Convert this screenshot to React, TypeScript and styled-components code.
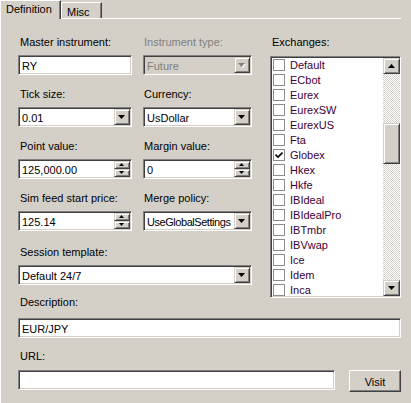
import React from 'react';
import styled, { createGlobalStyle, css } from 'styled-components';

const Global = createGlobalStyle`
  html, body { margin: 0; padding: 0; background: #d4d0c8; }
  body {
    font-family: "Liberation Sans", Arial, sans-serif;
    font-size: 11px;
    color: #000;
    width: 411px;
    height: 403px;
    overflow: hidden;
  }
`;

const sunken = css`
  border: 1px solid;
  border-color: #808080 #ffffff #ffffff #808080;
  box-shadow: inset 1px 1px 0 #404040, inset -1px -1px 0 #d4d0c8;
`;

const raised = css`
  border: 1px solid;
  border-color: #d4d0c8 #404040 #404040 #d4d0c8;
  box-shadow: inset 1px 1px 0 #ffffff, inset -1px -1px 0 #808080;
`;

const Window = styled.div`
  width: 411px;
  height: 403px;
  display: flex;
  flex-direction: column;
`;

const TabStrip = styled.div`
  display: flex;
  align-items: flex-end;
  height: 18px;
  position: relative;
  z-index: 1;
`;

const Tab = styled.div<{ $active?: boolean }>`
  box-sizing: border-box;
  background: #d4d0c8;
  border-top: 1px solid #fff;
  border-left: 1px solid #fff;
  border-right: 1px solid #404040;
  box-shadow: inset -1px 0 0 #808080;
  display: flex;
  align-items: center;
  ${(p) =>
    p.$active
      ? css`
          height: 19px;
          margin-bottom: -1px;
          padding: 0 6px 3px 5px;
          width: 61px;
        `
      : css`
          height: 16px;
          padding: 2px 6px 0 5px;
          width: 41px;
        `}
`;

const Panel = styled.div`
  flex: 1;
  border-top: 1px solid #fff;
  border-left: 1px solid #fff;
  padding: 17px 0 0 17px;
  display: flex;
  flex-direction: column;
  width: 383px;
`;

const Top = styled.div`
  display: flex;
  justify-content: space-between;
  width: 383px;
`;

const FormGrid = styled.div`
  display: grid;
  grid-template-columns: 114px 109px;
  column-gap: 11px;
  row-gap: 13px;
  align-content: start;
`;

const Field = styled.div<{ $span?: boolean }>`
  display: flex;
  flex-direction: column;
  ${(p) =>
    p.$span &&
    css`
      grid-column: 1 / span 2;
      margin-top: 2px;
    `}
`;

const Label = styled.div<{ $disabled?: boolean; $indent?: number }>`
  height: 13px;
  line-height: 13px;
  margin-bottom: 6px;
  padding-left: ${(p) => p.$indent ?? 2}px;
  color: ${(p) => (p.$disabled ? '#808080' : '#000')};
  white-space: nowrap;
`;

const TextBox = styled.div<{ $disabled?: boolean }>`
  ${sunken};
  box-sizing: border-box;
  height: 20px;
  background: ${(p) => (p.$disabled ? '#d4d0c8' : '#fff')};
  color: ${(p) => (p.$disabled ? '#808080' : '#000')};
  display: flex;
  align-items: center;
  padding: 0 2px 0 2px;
  white-space: nowrap;
  overflow: hidden;
`;

const Value = styled.span<{ $tight?: boolean }>`
  flex: 1;
  min-width: 0;
  overflow: hidden;
  padding-top: 1px;
  padding-left: 1px;
  letter-spacing: ${(p) => (p.$tight ? '-0.45px' : '0')};
`;

const DropButton = styled.div`
  ${raised};
  box-sizing: border-box;
  width: 16px;
  height: 16px;
  background: #d4d0c8;
  display: flex;
  align-items: center;
  justify-content: center;
  margin-right: -1px;
  flex: none;
`;

const SpinCol = styled.div`
  display: flex;
  flex-direction: column;
  margin-right: -1px;
  flex: none;
`;

const SpinButton = styled.div`
  ${raised};
  box-sizing: border-box;
  width: 16px;
  height: 8px;
  background: #d4d0c8;
  display: flex;
  align-items: center;
  justify-content: center;
`;

const Arrow = ({ disabled, up, small }: { disabled?: boolean; up?: boolean; small?: boolean }) => {
  const w = small ? 5 : 7;
  const h = small ? 3 : 4;
  const pts = up ? `0,${h} ${w / 2},0 ${w},${h}` : `0,0 ${w},0 ${w / 2},${h}`;
  return (
    <svg width={w + 1} height={h + 1} viewBox={`0 0 ${w + 1} ${h + 1}`} style={{ display: 'block' }}>
      {disabled && <polygon points={pts} fill="#fff" transform="translate(1,1)" />}
      <polygon points={pts} fill={disabled ? '#808080' : '#000'} />
    </svg>
  );
};

const Select = ({ value, disabled, tight }: { value: string; disabled?: boolean; tight?: boolean }) => (
  <TextBox $disabled={disabled}>
    <Value $tight={tight}>{value}</Value>
    <DropButton>
      <Arrow disabled={disabled} />
    </DropButton>
  </TextBox>
);

const Spinner = ({ value }: { value: string }) => (
  <TextBox>
    <Value>{value}</Value>
    <SpinCol>
      <SpinButton>
        <Arrow up small />
      </SpinButton>
      <SpinButton>
        <Arrow small />
      </SpinButton>
    </SpinCol>
  </TextBox>
);

const ExchCol = styled.div`
  width: 131px;
  display: flex;
  flex-direction: column;
`;

const ListBox = styled.div`
  ${sunken};
  box-sizing: border-box;
  height: 242px;
  margin-top: 1px;
  background: #fff;
  display: flex;
  padding: 0 0 0 2px;
`;

const Items = styled.div`
  flex: 1;
  overflow: hidden;
`;

const Item = styled.div`
  height: 15px;
  display: flex;
  align-items: center;
  gap: 5px;
  color: #3c0038;
  white-space: nowrap;
`;

const Check = styled.div`
  box-sizing: border-box;
  width: 12px;
  height: 12px;
  border: 1px solid #8c8c8c;
  background: #fff;
  display: flex;
  align-items: center;
  justify-content: center;
  flex: none;
`;

const ScrollBar = styled.div`
  width: 17px;
  margin: 1px 0;
  display: flex;
  flex-direction: column;
  background: repeating-conic-gradient(#d4d0c8 0 25%, #ffffff 0 50%) 0 0 / 2px 2px;
`;

const ScrollButton = styled.div`
  ${raised};
  box-sizing: border-box;
  width: 17px;
  height: 16px;
  background: #d4d0c8;
  display: flex;
  align-items: center;
  justify-content: center;
  flex: none;
`;

const Thumb = styled.div`
  ${raised};
  box-sizing: border-box;
  width: 17px;
  height: 41px;
  background: #d4d0c8;
  margin-top: 49px;
`;

const Spacer = styled.div`
  flex: 1;
`;

const Bottom = styled.div`
  display: flex;
  flex-direction: column;
  width: 383px;
`;

const DescLabel = styled(Label)`
  margin-top: -2px;
  margin-bottom: 9px;
`;

const UrlLabel = styled(Label)`
  margin-top: 12px;
  margin-bottom: 7px;
`;

const UrlRow = styled.div`
  display: flex;
  justify-content: space-between;
  align-items: flex-start;
`;

const UrlBox = styled(TextBox)`
  width: 317px;
`;

const Button = styled.div`
  border: 1px solid;
  border-color: #fff #404040 #404040 #fff;
  box-shadow: inset -1px -1px 0 #808080;
  box-sizing: border-box;
  width: 52px;
  height: 22px;
  background: #d4d0c8;
  display: flex;
  align-items: center;
  justify-content: center;
  padding-top: 1px;
`;

const exchanges = [
  'Default', 'ECbot', 'Eurex', 'EurexSW', 'EurexUS', 'Fta', 'Globex', 'Hkex', 'Hkfe',
  'IBIdeal', 'IBIdealPro', 'IBTmbr', 'IBVwap', 'Ice', 'Idem', 'Inca',
];

export default function App() {
  return (
    <Window>
      <Global />
      <TabStrip>
        <Tab $active>Definition</Tab>
        <Tab>Misc</Tab>
      </TabStrip>
      <Panel>
        <Top>
          <FormGrid>
            <Field>
              <Label>Master instrument:</Label>
              <TextBox><Value>RY</Value></TextBox>
            </Field>
            <Field>
              <Label $disabled $indent={1}>Instrument type:</Label>
              <Select value="Future" disabled />
            </Field>
            <Field>
              <Label>Tick size:</Label>
              <Select value="0.01" />
            </Field>
            <Field>
              <Label $indent={1}>Currency:</Label>
              <Select value="UsDollar" />
            </Field>
            <Field>
              <Label>Point value:</Label>
              <Spinner value="125,000.00" />
            </Field>
            <Field>
              <Label $indent={1}>Margin value:</Label>
              <Spinner value="0" />
            </Field>
            <Field>
              <Label>Sim feed start price:</Label>
              <Spinner value="125.14" />
            </Field>
            <Field>
              <Label $indent={1}>Merge policy:</Label>
              <Select value="UseGlobalSettings" tight />
            </Field>
            <Field $span>
              <Label>Session template:</Label>
              <Select value="Default 24/7" />
            </Field>
          </FormGrid>
          <ExchCol>
            <Label>Exchanges:</Label>
            <ListBox>
              <Items>
                {exchanges.map((e) => (
                  <Item key={e}>
                    <Check>
                      {e === 'Globex' && (
                        <svg width="8" height="8" viewBox="0 0 8 8">
                          <path d="M0.5 3.5 L3 6 L7.5 1.5" stroke="#000" strokeWidth="1.6" fill="none" />
                        </svg>
                      )}
                    </Check>
                    <span>{e}</span>
                  </Item>
                ))}
              </Items>
              <ScrollBar>
                <ScrollButton><Arrow up /></ScrollButton>
                <Thumb />
                <Spacer />
                <ScrollButton><Arrow /></ScrollButton>
              </ScrollBar>
            </ListBox>
          </ExchCol>
        </Top>
        <Bottom>
          <DescLabel>Description:</DescLabel>
          <TextBox><Value>EUR/JPY</Value></TextBox>
          <UrlLabel>URL:</UrlLabel>
          <UrlRow>
            <UrlBox />
            <Button>Visit</Button>
          </UrlRow>
        </Bottom>
      </Panel>
    </Window>
  );
}
